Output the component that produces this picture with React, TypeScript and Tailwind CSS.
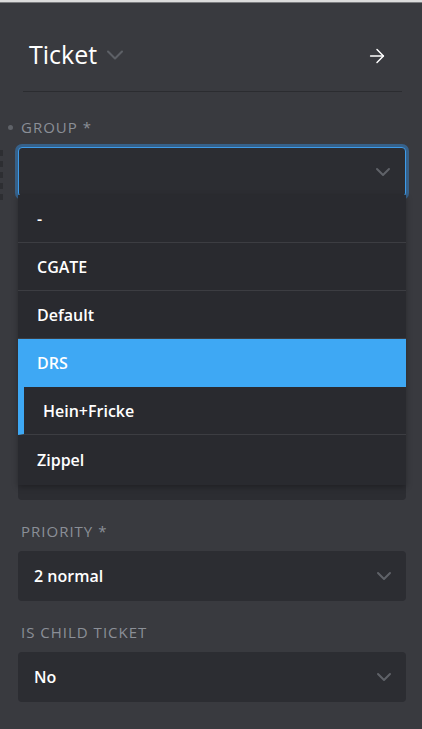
import { ChevronDown, ArrowRight } from 'lucide-react'

const GROUPS = [
  { id: 'none', label: '-' },
  { id: 'cgate', label: 'CGATE' },
  { id: 'default', label: 'Default' },
  { id: 'drs', label: 'DRS', active: true },
  { id: 'hein', label: 'Hein+Fricke', child: true },
  { id: 'zippel', label: 'Zippel' },
]

function Label({ children }: { children?: React.ReactNode }) {
  return (
    <div className="mb-[10px] h-[20px] pl-[3px] text-[15px] leading-[20px] tracking-[1px] text-[#8b8f97] uppercase">
      {children}
    </div>
  )
}

function Select({ value }: { value?: string }) {
  return (
    <div className="flex h-[50px] items-center justify-between rounded-[4px] bg-[#2c2d32] px-4">
      <span className="text-[16px] font-semibold text-white">{value}</span>
      <ChevronDown size={24} strokeWidth={2} className="-mr-[6px] text-[#5f6268]" />
    </div>
  )
}

function GroupDropdown() {
  return (
    <div className="absolute left-0 right-0 top-[48px] z-10 bg-[#292a2f] shadow-[0_2px_6px_rgba(0,0,0,0.3)]">
      {GROUPS.map((g) => {
        if (g.active) {
          return (
            <div key={g.id} className="flex h-[48px] items-center bg-[#3ea8f4] pl-[19px] text-[16px] font-semibold text-white">
              {g.label}
            </div>
          )
        }
        return (
          <div
            key={g.id}
            className={
              g.child
                ? 'flex h-[48px] items-center border-b border-l-[6px] border-b-[#3c3d42] border-l-[#3ea8f4] pl-[19px] text-[16px] font-semibold text-white'
                : 'flex h-[48px] items-center border-b border-[#3c3d42] pl-[19px] text-[16px] font-semibold text-white last:h-[50px] last:border-b-0'
            }
          >
            {g.label}
          </div>
        )
      })}
    </div>
  )
}

export default function App() {
  return (
    <div className="relative min-h-[729px] w-full bg-[#393a3f] font-['Open_Sans','Noto_Sans',sans-serif]">
      <div className="h-[2px] bg-[#dcdcdc]" />
      <div className="h-px bg-[#7c7d80]" />

      {/* resize handle on the left edge */}
      <div className="absolute left-0 top-[150px] flex flex-col gap-[5px]">
        {[0, 1, 2, 3, 4].map((i) => (
          <div key={i} className="h-[6px] w-[3px] bg-[#2d2e32]" />
        ))}
      </div>

      <div className="pl-[18px] pr-[16px]">
        {/* Header */}
        <div className="ml-[5px] mr-[4px] flex h-[89px] items-center justify-between border-b border-[#2b2c30] pl-[6px] pr-[14px] pt-[14px]">
          <div className="flex items-center gap-[4px]">
            <span className="text-[25px] leading-none text-white">Ticket</span>
            <ChevronDown size={28} strokeWidth={1.8} className="mt-[2px] text-[#5d6066]" />
          </div>
          <ArrowRight size={22} strokeWidth={1.6} className="mt-[3px] text-white" />
        </div>

        <div className="mt-[25px] flex flex-col gap-[21px]">
          {/* Group (focused, open) */}
          <div>
            <div className="relative">
              <span className="absolute left-[-10px] top-[8px] h-[5px] w-[5px] rounded-full bg-[#5f6268]" />
              <Label>Group *</Label>
            </div>
            <div className="relative">
              <div className="flex h-[50px] items-center justify-between rounded-[4px] border border-[#3d9be9] bg-[#2c2d32] px-4 shadow-[0_0_0_3px_rgba(52,130,200,0.55)]">
                <span />
                <ChevronDown size={24} strokeWidth={2} className="-mr-[6px] text-[#5f6268]" />
              </div>
              <GroupDropdown />
            </div>
          </div>

          {/* fields hidden behind the open dropdown */}
          <div>
            <Label />
            <Select />
          </div>
          <div>
            <Label />
            <Select />
          </div>
          <div>
            <Label />
            <Select />
          </div>

          <div>
            <Label>Priority *</Label>
            <Select value="2 normal" />
          </div>

          <div>
            <Label>Is child ticket</Label>
            <Select value="No" />
          </div>
        </div>
      </div>
    </div>
  )
}
